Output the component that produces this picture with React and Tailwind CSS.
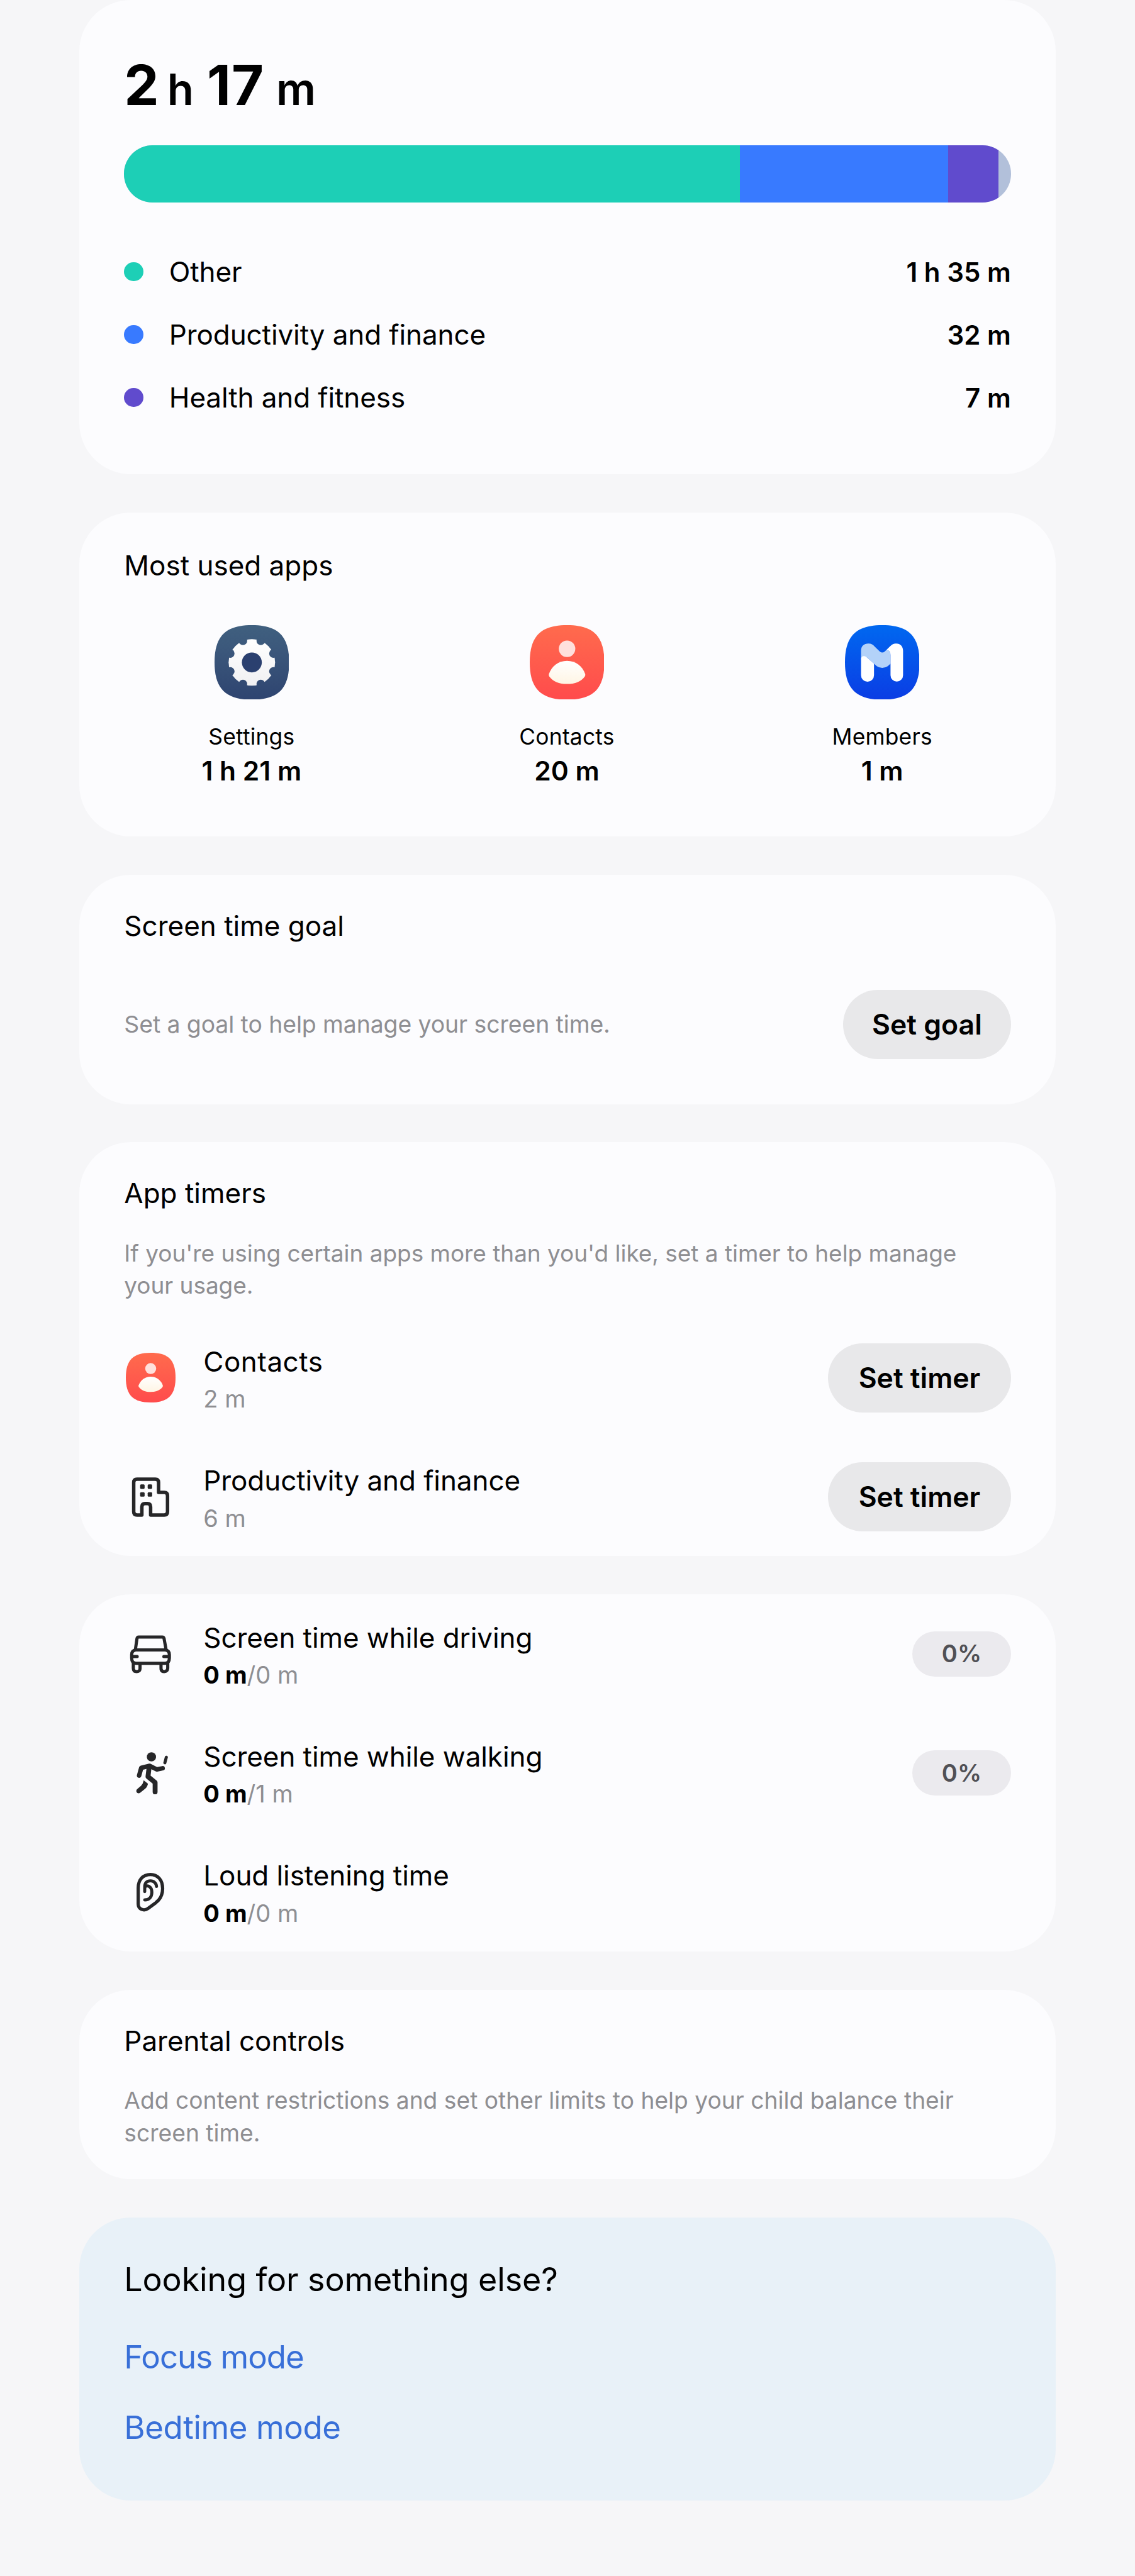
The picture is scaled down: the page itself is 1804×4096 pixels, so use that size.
import React from "react";

const SQUIRCLE = "M0 61C0 18 18 0 61 0S122 18 122 61 104 122 61 122 0 104 0 61Z";

function SettingsIcon({ className }) {
  const notches = [
    [35.3, 14.6], [14.6, 35.3], [-14.6, 35.3], [-35.3, 14.6],
    [-35.3, -14.6], [-14.6, -35.3], [14.6, -35.3], [35.3, -14.6],
  ];
  return (
    <svg viewBox="0 0 122 122" className={className}>
      <defs>
        <linearGradient id="settings-bg" x1="0" y1="0" x2="0" y2="1">
          <stop offset="0" stopColor="#40607f" />
          <stop offset="0.35" stopColor="#3b577b" />
          <stop offset="1" stopColor="#2e4470" />
        </linearGradient>
        <linearGradient id="settings-gear" x1="0" y1="0" x2="0" y2="1">
          <stop offset="0" stopColor="#ffffff" />
          <stop offset="1" stopColor="#f0f0f2" />
        </linearGradient>
        <mask id="gear-mask">
          <circle cx="61" cy="61" r="38" fill="#fff" />
          {notches.map(([x, y]) => (
            <circle key={`${x},${y}`} cx={61 + x} cy={61 + y} r="7" fill="#000" />
          ))}
          <circle cx="61" cy="61" r="16.3" fill="#000" />
        </mask>
      </defs>
      <path d={SQUIRCLE} fill="url(#settings-bg)" />
      <circle cx="61" cy="61" r="17" fill="#2b406f" />
      <rect x="22" y="22" width="78" height="78" fill="url(#settings-gear)" mask="url(#gear-mask)" />
    </svg>
  );
}

function ContactsIcon({ className, id }) {
  return (
    <svg viewBox="0 0 122 122" className={className}>
      <defs>
        <linearGradient id={`${id}-bg`} x1="0" y1="0" x2="0" y2="1">
          <stop offset="0" stopColor="#ff6b4d" />
          <stop offset="1" stopColor="#ff4b4c" />
        </linearGradient>
        <linearGradient id={`${id}-body`} x1="0" y1="0" x2="0" y2="1">
          <stop offset="0" stopColor="#ffffff" />
          <stop offset="1" stopColor="#fff5e4" />
        </linearGradient>
      </defs>
      <path d={SQUIRCLE} fill={`url(#${id}-bg)`} />
      <circle cx="61" cy="38.7" r="13.5" fill="#ffe0dc" />
      <path
        d="M61 58.5C75 58.5 86 67 90.7 80Q91.3 82 90 84C84 92 74 96.3 61 96.3S38 92 32 84Q30.7 82 31.3 80C36 67 47 58.5 61 58.5Z"
        fill={`url(#${id}-body)`}
      />
    </svg>
  );
}

function MembersIcon({ className }) {
  return (
    <svg viewBox="0 0 122 122" className={className}>
      <defs>
        <linearGradient id="members-bg" x1="0" y1="0" x2="0" y2="1">
          <stop offset="0" stopColor="#0068f0" />
          <stop offset="1" stopColor="#0b3de4" />
        </linearGradient>
      </defs>
      <path d={SQUIRCLE} fill="url(#members-bg)" />
      <path
        d="M26.3 56V42C26.3 34 31 30 38.4 30 43 30 46 32 48.5 35L57 43.2Q61 46.5 65 43.2L68 40.5Q74.5 41 74.5 49V63L70 67Q61 73 52 67L47.5 63 36 53Z"
        fill="#b3d2f9"
      />
      <path
        d="M65 43.2L74 34.5C76.5 31.5 80 30 83.5 30 91 30 95 35 95 42V82A10.25 10.25 0 0 1 74.5 82V49Q74.5 41 68 40.5Z"
        fill="#fff"
      />
      <path
        d="M26.3 56Q26.3 50.5 31.5 50.7 34 51 36 53L47.5 63V82A10.6 10.6 0 0 1 26.3 82Z"
        fill="#fff"
      />
    </svg>
  );
}

function BuildingIcon({ className }) {
  return (
    <svg viewBox="24 17 261 261" className={className} fill="none" stroke="#262628" strokeWidth="17" strokeLinejoin="round">
      <path d="M88 236Q72 236 72 220V76Q72 60 88 60H178Q194 60 194 76V125H222Q238 125 238 141V220Q238 236 222 236H155V196Q155 180 139 180H128Q112 180 112 196V236Z" />
      <g fill="#262628" stroke="none">
        <rect x="103.500" y="86" width="22" height="22" rx="5" />
        <rect x="140.500" y="86" width="22" height="22" rx="5" />
        <rect x="103.500" y="124" width="22" height="22" rx="5" />
        <rect x="140.500" y="124" width="22" height="22" rx="5" />
      </g>
    </svg>
  );
}

function CarIcon({ className }) {
  return (
    <svg viewBox="24 8 261 261" className={className} fill="none" stroke="#262628" strokeWidth="15.5" strokeLinecap="round" strokeLinejoin="round">
      <path d="M80 117L88 62Q89 54 97 54H212Q220 54 221 62L231 117" />
      <path d="M83 118H226Q247 120 247 141V158Q247 183 226 183H83Q62 183 62 158V141Q62 120 83 118Z" />
      <path d="M66 150H89M220 150H243" />
      <path d="M70 183V207Q70 224 87 224T103 207V188M206 188V207Q206 224 222 224T239 207V183" />
    </svg>
  );
}

function WalkingIcon({ className }) {
  return (
    <svg viewBox="24 593 261 261" className={className} fill="none" stroke="#262628" strokeLinecap="round" strokeLinejoin="round">
      <circle cx="159" cy="644" r="22.500" fill="#262628" stroke="none" />
      <path d="M232 646L225 673" strokeWidth="15" />
      <path d="M98.500 736L109 698 150 688 186 706 214 700" strokeWidth="22" />
      <path d="M148 692L142 741 177 770V816" strokeWidth="24" />
      <path d="M121 759L142 776C140 786 136 794 129 800L104 820C90 830 78 812 89 802L108 786Q118 776 121 759Z" fill="#262628" stroke="none" />
    </svg>
  );
}

function EarIcon({ className }) {
  return (
    <svg viewBox="24 1178 261 261" className={className} fill="none" stroke="#262628" strokeWidth="16" strokeLinecap="round" strokeLinejoin="round">
      <path d="M94 1290C94 1248 118 1223 154 1223S214 1250 214 1292C214 1325 202 1345 180 1362L142 1390C122 1404 94 1394 94 1368Z" />
      <g strokeWidth="15">
        <path d="M126 1307V1284C126 1264 137 1254 154 1254S183 1266 184 1282" />
        <path d="M128 1284C134 1272 161 1280 161 1310 161 1334 148 1348 126 1348" />
      </g>
    </svg>
  );
}

function Card({ className, children }) {
  return <section className={`flex flex-col rounded-[82px] px-[71.6px] ${className}`}>{children}</section>;
}

function CardTitle({ children }) {
  return <h2 className="text-[44px] leading-[52px] whitespace-nowrap text-black">{children}</h2>;
}

function ActionButton({ className, children }) {
  return (
    <button className={`flex h-[110px] shrink-0 items-center justify-center rounded-full bg-[#e8e8ea] text-[44.5px] font-semibold text-black ${className}`}>
      {children}
    </button>
  );
}

function ListRow({ icon, title, detail, action, titleClass = "tracking-[-0.08px]" }) {
  return (
    <div className="flex h-[189.4px] items-center gap-[41.5px]">
      <div className="flex w-[84.5px] shrink-0 items-center justify-center">{icon}</div>
      <div className="flex grow flex-col gap-[7.6px] pt-[7px] whitespace-nowrap">
        <div className={`text-[44px] leading-[52px] text-black ${titleClass}`}>{title}</div>
        <div className="text-[38px] leading-[52px] text-[#8e8e92]">{detail}</div>
      </div>
      {action}
    </div>
  );
}

function Usage({ used, limit }) {
  return (
    <>
      <b className="font-bold text-black">{used}</b>/{limit}
    </>
  );
}

function Percent({ children }) {
  return (
    <span className="flex h-[72px] w-[156.5px] shrink-0 items-center justify-center rounded-full bg-[#ebeaee] text-[38px] font-semibold text-[#505055]">
      {children}
    </span>
  );
}

const CATEGORIES = [
  { name: "Other", time: "1 h 35 m", dot: "bg-[#1dcfb6]" },
  { name: "Productivity and finance", time: "32 m", dot: "bg-[#387aff]" },
  { name: "Health and fitness", time: "7 m", dot: "bg-[#604bcd]" },
];

const APPS = [
  { name: "Settings", time: "1 h 21 m", icon: <SettingsIcon className="size-[118.6px]" /> },
  { name: "Contacts", time: "20 m", icon: <ContactsIcon id="contacts-top" className="size-[118.6px]" /> },
  { name: "Members", time: "1 m", icon: <MembersIcon className="size-[118.6px]" /> },
];

export default function App() {
  return (
    <main className="flex h-[4096px] w-[1804px] flex-col gap-[60.8px] overflow-hidden bg-[#f6f6f8] px-[125.7px] font-['Inter',sans-serif]">
      <Card className="h-[754px] bg-[#fcfcfe] pt-[91px]">
        <h1 className="flex h-[88px] items-baseline leading-[88px] font-bold whitespace-nowrap text-black">
          <span className="text-[88px] tracking-[-3px]">2</span>
          <span className="ml-[16px] text-[69px] font-semibold">h</span>
          <span className="ml-[21px] text-[88px] tracking-[1px]">17</span>
          <span className="ml-[19px] text-[70px] font-semibold">m</span>
        </h1>
        <div className="mt-[52px] flex h-[91px] overflow-hidden rounded-full bg-[#b2c0da]">
          <div className="w-[978.7px] bg-[#1dcfb6]" />
          <div className="w-[331.3px] bg-[#387aff]" />
          <div className="w-[80px] bg-[#604bcd]" />
        </div>
        <ul className="mt-[60px]">
          {CATEGORIES.map((c) => (
            <li key={c.name} className="flex h-[100px] items-center">
              <span className={`size-[30.5px] rounded-full ${c.dot}`} />
              <span className="ml-[41px] grow text-[44px] tracking-[-0.1px] text-black">{c.name}</span>
              <span className="text-[42px] font-semibold text-black">{c.time}</span>
            </li>
          ))}
        </ul>
      </Card>

      <Card className="h-[515px] bg-[#fcfcfe] pt-[58px]">
        <CardTitle>Most used apps</CardTitle>
        <div className="-mr-[51px] -ml-12 mt-[69px] grid grid-cols-3 pr-[5px]">
          {APPS.map((a) => (
            <div key={a.name} className="flex flex-col items-center text-black">
              {a.icon}
              <div className="mt-[38px] text-[35.4px] leading-[44px] tracking-[0.2px]">{a.name}</div>
              <div className="mt-[7px] text-[42.5px] leading-[50px] font-semibold">{a.time}</div>
            </div>
          ))}
        </div>
      </Card>

      <Card className="h-[365px] bg-[#fcfcfe] pt-[55.4px]">
        <CardTitle>Screen time goal</CardTitle>
        <div className="mt-[76.4px] flex items-center justify-between">
          <p className="text-[37.4px] tracking-[-0.09px] text-[#8e8e92]">Set a goal to help manage your screen time.</p>
          <ActionButton className="w-[266.6px]">Set goal</ActionButton>
        </div>
      </Card>

      <Card className="h-[658px] bg-[#fcfcfe] pt-[55px]">
        <CardTitle>App timers</CardTitle>
        <p className="mt-[43.500px] text-[37px] leading-[51px] tracking-[-0.04px] whitespace-nowrap text-[#8e8e92]">
          If you're using certain apps more than you'd like, set a timer to help manage
          <br />
          your usage.
        </p>
        <div className="mt-[27.4px]">
          <ListRow
            icon={<ContactsIcon id="contacts-row" className="size-[79px]" />}
            title="Contacts"
            titleClass="tracking-[0.5px]"
            detail="2 m"
            action={<ActionButton className="w-[290.6px]">Set timer</ActionButton>}
          />
          <ListRow
            icon={<BuildingIcon className="size-[84.5px]" />}
            title="Productivity and finance"
            detail="6 m"
            action={<ActionButton className="w-[290.6px]">Set timer</ActionButton>}
          />
        </div>
      </Card>

      <Card className="h-[568px] bg-[#fcfcfe]">
        <ListRow
          icon={<CarIcon className="size-[84.5px]" />}
          title="Screen time while driving"
          detail={<Usage used="0 m" limit="0 m" />}
          action={<Percent>0%</Percent>}
        />
        <ListRow
          icon={<WalkingIcon className="size-[84.5px]" />}
          title="Screen time while walking"
          detail={<Usage used="0 m" limit="1 m" />}
          action={<Percent>0%</Percent>}
        />
        <ListRow
          icon={<EarIcon className="size-[84.5px]" />}
          title="Loud listening time"
          detail={<Usage used="0 m" limit="0 m" />}
        />
      </Card>

      <Card className="h-[301px] bg-[#fcfcfe] pt-[55px]">
        <CardTitle>Parental controls</CardTitle>
        <p className="mt-[43.500px] text-[37.2px] leading-[51.500px] whitespace-nowrap text-[#8e8e92]">
          Add content restrictions and set other limits to help your child balance their
          <br />
          screen time.
        </p>
      </Card>

      <Card className="h-[450px] bg-[#e8f1f8] pt-[67px]">
        <h2 className="text-[52px] leading-[64px] tracking-[-0.12px] text-black">Looking for something else?</h2>
        <nav className="mt-[36px] flex flex-col text-[51px] text-[#386fd8]">
          <a className="flex h-[111.6px] items-center tracking-[-1px]">Focus mode</a>
          <a className="flex h-[111.6px] items-center tracking-[-0.4px]">Bedtime mode</a>
        </nav>
      </Card>
    </main>
  );
}
